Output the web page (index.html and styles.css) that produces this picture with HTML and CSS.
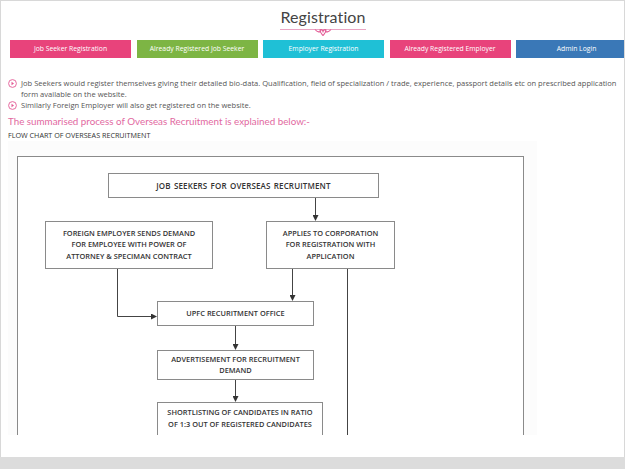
FILE: index.html
```html
<!DOCTYPE html>
<html lang="en">
<head>
    <meta charset="UTF-8">
    <meta name="viewport" content="width=device-width, initial-scale=1.0">
    <title>Registration</title>
    <link rel="stylesheet" href="styles.css">
</head>
<body>
    <div class="page">
        <!-- Heading with ornament -->
        <div class="title-wrap">
            <h1 class="title">Registration</h1>
            <svg class="ornament" width="86" height="9" viewBox="0 0 86 9">
                <line x1="0" y1="2.5" x2="86" y2="2.5" stroke="#eaa5c3" stroke-width="1"/>
                <path d="M35 2.5 C37.5 5.5, 40 5.5, 41 3.5 M51 2.5 C48.5 5.5, 46 5.5, 45 3.5 M40 3 C40 6, 42 7, 43 8.5 C44 7, 46 6, 46 3 C45 2, 43.5 3, 43 4.5 C42.5 3, 41 2, 40 3 Z" fill="none" stroke="#e35a95" stroke-width="1.1"/>
            </svg>
        </div>

        <nav class="reg-buttons">
            <a href="#" class="btn btn-pink">Job Seeker Registration</a>
            <a href="#" class="btn btn-green">Already Registered Job Seeker</a>
            <a href="#" class="btn btn-cyan">Employer Registration</a>
            <a href="#" class="btn btn-pink">Already Registered Employer</a>
            <a href="#" class="btn btn-blue">Admin Login</a>
        </nav>

        <ul class="info-list">
            <li>
                <svg class="bullet" width="9" height="9" viewBox="0 0 9 9"><circle cx="4.5" cy="4.5" r="3.9" fill="none" stroke="#e35a95" stroke-width="0.9"/><path d="M3.5 2.8 L6 4.5 L3.5 6.2 Z" fill="#e35a95"/></svg>
                <span>Job Seekers would register themselves giving their detailed bio-data. Qualification, field of specialization / trade, experience, passport details etc on prescribed application form available on the website.</span>
            </li>
            <li>
                <svg class="bullet" width="9" height="9" viewBox="0 0 9 9"><circle cx="4.5" cy="4.5" r="3.9" fill="none" stroke="#e35a95" stroke-width="0.9"/><path d="M3.5 2.8 L6 4.5 L3.5 6.2 Z" fill="#e35a95"/></svg>
                <span>Similarly Foreign Employer will also get registered on the website.</span>
            </li>
        </ul>

        <p class="process-title">The summarised process of Overseas Recruitment is explained below:-</p>
        <p class="chart-caption">FLOW CHART OF OVERSEAS RECRUITMENT</p>

        <!-- Flow chart (diagram nodes placed on the canvas) -->
        <div class="flowchart">
            <div class="chart-frame"></div>
            <svg class="chart-lines" width="529" height="294" viewBox="0 0 529 294">
                <defs>
                    <marker id="arrow" markerWidth="6" markerHeight="6" refX="5" refY="3" orient="auto" markerUnits="userSpaceOnUse">
                        <path d="M0 0 L6 3 L0 6 Z" fill="#333"/>
                    </marker>
                </defs>
                <g stroke="#444" stroke-width="1" fill="none">
                    <line x1="307.5" y1="56" x2="307.5" y2="79" marker-end="url(#arrow)"/>
                    <polyline points="109.5,127 109.5,175.5 148,175.5" marker-end="url(#arrow)"/>
                    <line x1="284.5" y1="127" x2="284.5" y2="159" marker-end="url(#arrow)"/>
                    <line x1="339.5" y1="127" x2="339.5" y2="294"/>
                    <line x1="227.5" y1="184" x2="227.5" y2="208" marker-end="url(#arrow)"/>
                    <line x1="227.5" y1="238" x2="227.5" y2="260" marker-end="url(#arrow)"/>
                </g>
            </svg>
            <div class="node node-seekers">JOB SEEKERS FOR OVERSEAS RECRUITMENT</div>
            <div class="node node-employer">FOREIGN EMPLOYER SENDS DEMAND<br>FOR EMPLOYEE WITH POWER OF<br>ATTORNEY &amp; SPECIMAN CONTRACT</div>
            <div class="node node-applies">APPLIES TO CORPORATION<br>FOR REGISTRATION WITH<br>APPLICATION</div>
            <div class="node node-office">UPFC RECURITMENT OFFICE</div>
            <div class="node node-advert">ADVERTISEMENT FOR RECRUITMENT<br>DEMAND</div>
            <div class="node node-shortlist">SHORTLISTING OF CANDIDATES IN RATIO<br>OF 1:3 OUT OF REGISTERED CANDIDATES</div>
        </div>
    </div>
</body>
</html>
```

FILE: styles.css
```css
html, body {
    margin: 0;
    padding: 0;
}

body {
    background: #dcdcdc;
    font-family: 'Open Sans', 'Liberation Sans', sans-serif;
    color: #555;
    overflow: hidden;
}

.page {
    background: #fff;
    height: 456px;
    border: 1px solid #d8d8d8;
    border-bottom: none;
    overflow: hidden;
}

/* Heading */
.title-wrap {
    display: flex;
    flex-direction: column;
    align-items: center;
    padding-left: 21px;
    padding-top: 5px;
}

.title {
    margin: 0;
    font-family: 'Lato', 'Open Sans', sans-serif;
    font-weight: 400;
    font-size: 16px;
    line-height: 21px;
    color: #444;
    letter-spacing: 0.1px;
}

.ornament {
    display: block;
}

/* Buttons row */
.reg-buttons {
    display: flex;
    gap: 5.5px;
    padding-left: 9px;
    margin-top: 4px;
    width: 700px;
}

.btn {
    flex: 0 0 121px;
    height: 18px;
    line-height: 18px;
    text-align: center;
    color: #fff;
    font-size: 6.8px;
    text-decoration: none;
    font-family: 'Open Sans', sans-serif;
}

.btn-pink { background: #e8437b; }
.btn-green { background: #7db544; }
.btn-cyan { background: #1fc0d6; }
.btn-blue { background: #3a78b7; }

/* Info list */
.info-list {
    list-style: none;
    margin: 20px 0 0 0;
    padding: 0 3px 0 7px;
}

.info-list li {
    display: flex;
    align-items: flex-start;
    gap: 4px;
    font-size: 7.55px;
    line-height: 11px;
    color: #555;
}

.bullet {
    flex: 0 0 9px;
    margin-top: 1px;
}

.process-title {
    margin: 1px 0 0 0;
    padding-left: 7px;
    font-family: 'Lato', sans-serif;
    font-weight: 400;
    font-size: 9.8px;
    line-height: 18px;
    color: #e2699f;
}

.chart-caption {
    margin: 0;
    padding-left: 7px;
    font-size: 7.2px;
    line-height: 10px;
    color: #333;
}

/* Flow chart */
.flowchart {
    position: relative;
    margin: 1px 0 0 7px;
    width: 529px;
    height: 294px;
    background: #fcfcfc;
    overflow: hidden;
}

.chart-frame {
    position: absolute;
    left: 9px;
    top: 15px;
    width: 505px;
    height: 320px;
    border: 1px solid #8a8a8a;
    background: #fff;
}

.chart-lines {
    position: absolute;
    left: 0;
    top: 0;
}

.node {
    position: absolute;
    box-sizing: border-box;
    border: 1px solid #8a8a8a;
    background: #fff;
    display: flex;
    align-items: center;
    justify-content: center;
    text-align: center;
    font-family: 'Open Sans', sans-serif;
    font-weight: 600;
    font-size: 7.4px;
    line-height: 11.5px;
    color: #333;
    white-space: nowrap;
}

.node-seekers { left: 100px; top: 32px; width: 271px; height: 25px; font-size: 8px; letter-spacing: 0.15px; word-spacing: 1px; }
.node-employer { left: 37px; top: 80px; width: 168px; height: 48px; }
.node-applies { left: 258px; top: 80px; width: 129px; height: 48px; }
.node-office { left: 149px; top: 160px; width: 157px; height: 25px; }
.node-advert { left: 149px; top: 209px; width: 157px; height: 30px; }
.node-shortlist { left: 149px; top: 261px; width: 166px; height: 45px; align-items: flex-start; padding-top: 4px; }
```
